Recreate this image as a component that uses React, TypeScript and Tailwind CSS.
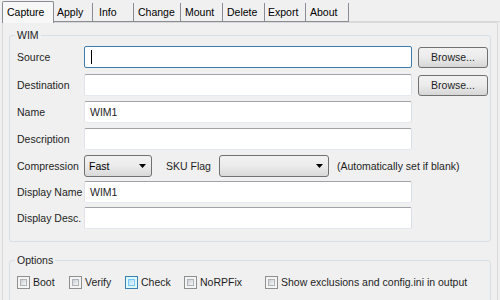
import React from 'react';

const tabs = [
  { name: 'Capture', w: 'w-[52px]', pl: 'pl-[4px]' },
  { name: 'Apply', w: 'w-[39px]', pl: 'pl-[3px]' },
  { name: 'Info', w: 'w-[41px]', pl: 'pl-[6px]' },
  { name: 'Change', w: 'w-[47px]', pl: 'pl-[4px]' },
  { name: 'Mount', w: 'w-[42px]', pl: 'pl-[4px]' },
  { name: 'Delete', w: 'w-[42px]', pl: 'pl-[4px]' },
  { name: 'Export', w: 'w-[41px]', pl: 'pl-[3px]' },
  { name: 'About', w: 'w-[43px]', pl: 'pl-[4px]' },
];

function TextBox({ value, focused, w = 'w-[328px]' }: { value?: string; focused?: boolean; w?: string }) {
  return (
    <div
      className={`${w} h-[22px] bg-white border rounded-[2px] flex items-center pl-[5px] ${
        focused ? 'border-[#3d7bad]' : 'border-[#abadb3] border-t-[#a0a2a8] border-l-[#e2e3ea] border-r-[#dbdfe6] border-b-[#e3e9ef]'
      }`}
    >
      {focused && <div className="w-px h-[14px] bg-black ml-[1px]" />}
      {value && <span className="text-[#1e1e1e]">{value}</span>}
    </div>
  );
}

function Browse() {
  return (
    <div className="ml-[6px] w-[70px] h-[21px] rounded-[3px] border border-[#707070] bg-gradient-to-b from-[#f2f2f2] via-[#ebebeb] to-[#d6d6d6] flex items-center justify-center text-[#1e1e1e]">
      Browse...
    </div>
  );
}

function Combo({ value, w }: { value?: string; w: string }) {
  return (
    <div className={`${w} h-[22px] rounded-[3px] border border-[#707070] bg-gradient-to-b from-[#f2f2f2] via-[#ebebeb] to-[#d9d9d9] flex items-center justify-between pl-[4px] pr-[5px]`}>
      <span className="text-black">{value}</span>
      <svg width="7" height="4" viewBox="0 0 7 4">
        <path d="M0 0 L7 0 L3.5 4 Z" fill="#000" />
      </svg>
    </div>
  );
}

function Row({ label, children, mt }: { label: string; children: React.ReactNode; mt: string }) {
  return (
    <div className={`flex items-center h-[22px] ${mt}`}>
      <div className="w-[74px] pl-[7px] text-[#1e1e1e] whitespace-nowrap">{label}</div>
      {children}
    </div>
  );
}

function Check({ label, hot, w }: { label: string; hot?: boolean; w: string }) {
  return (
    <div className={`flex items-center ${w}`}>
      <div
        className={`w-[13px] h-[13px] border p-[2px] ${
          hot ? 'border-[#3c7fb1] bg-[#def9fa]' : 'border-[#8e8f8f] bg-[#f4f4f4]'
        }`}
      >
        <div
          className={`w-full h-full border ${
            hot ? 'border-[#79c6f9] bg-gradient-to-br from-[#b1dffd] to-[#e9f7fe]' : 'border-[#aeb3b9] bg-gradient-to-br from-[#cbcfd5] to-[#f6f6f6]'
          }`}
        />
      </div>
      <span className="ml-[3px] text-[#1e1e1e] whitespace-nowrap">{label}</span>
    </div>
  );
}

export default function App() {
  return (
    <div
      className="w-[500px] h-[300px] bg-[#f0f0f0] overflow-hidden text-[10.5px] leading-[13px]"
      style={{ fontFamily: '"Liberation Sans", Arial, sans-serif' }}
    >
      <div className="flex h-[22px] items-end">
        {tabs.map((t, i) => (
          <div
            key={t.name}
            className={`${t.w} ${t.pl} flex items-center text-black ${
              i === 0
                ? 'h-[22px] ml-[2px] border border-b-0 border-[#898c95] bg-[#f7f7f7] rounded-t-[2px] z-10 -mb-px'
                : 'h-[19px] border-r border-[#898c95] border-b border-b-[#898c95]'
            }`}
          >
            {t.name}
          </div>
        ))}
        <div className="flex-1 h-[19px] border-b border-[#d9d9d9]" />
      </div>

      <div className="h-[278px] border border-[#d9d9d9] border-b-0 mx-[2px] bg-[#f0f0f0] px-[6px]">
        <fieldset className="mt-[6px] border border-[#d5dfe5] rounded-[3px] h-[213px]">
          <legend className="ml-[5px] px-[2px] text-[#1e1e1e]">WIM</legend>
          <div className="pt-[4px]">
            <Row label="Source" mt="mt-0">
              <TextBox focused />
              <Browse />
            </Row>
            <Row label="Destination" mt="mt-[6px]">
              <TextBox />
              <Browse />
            </Row>
            <Row label="Name" mt="mt-[5px]">
              <TextBox value="WIM1" />
            </Row>
            <Row label="Description" mt="mt-[5px]">
              <TextBox />
            </Row>
            <Row label="Compression" mt="mt-[5px]">
              <Combo value="Fast" w="w-[68px]" />
              <span className="ml-[14px] text-[#1e1e1e]">SKU Flag</span>
              <div className="ml-[8px]">
                <Combo w="w-[110px]" />
              </div>
              <span className="ml-[8px] text-[#1e1e1e] whitespace-nowrap">(Automatically set if blank)</span>
            </Row>
            <Row label="Display Name" mt="mt-[4px]">
              <TextBox value="WIM1" />
            </Row>
            <Row label="Display Desc." mt="mt-[4px]">
              <TextBox />
            </Row>
          </div>
        </fieldset>

        <fieldset className="mt-[12px] border border-[#d5dfe5] rounded-[3px] h-[60px]">
          <legend className="ml-[5px] px-[2px] text-[#1e1e1e]">Options</legend>
          <div className="flex items-center pt-[9px] pl-[7px]">
            <Check label="Boot" w="w-[52px]" />
            <Check label="Verify" w="w-[56px]" />
            <Check label="Check" hot w="w-[59px]" />
            <Check label="NoRPFix" w="w-[81px]" />
            <Check label="Show exclusions and config.ini in output" w="w-[220px]" />
          </div>
        </fieldset>
      </div>
    </div>
  );
}
